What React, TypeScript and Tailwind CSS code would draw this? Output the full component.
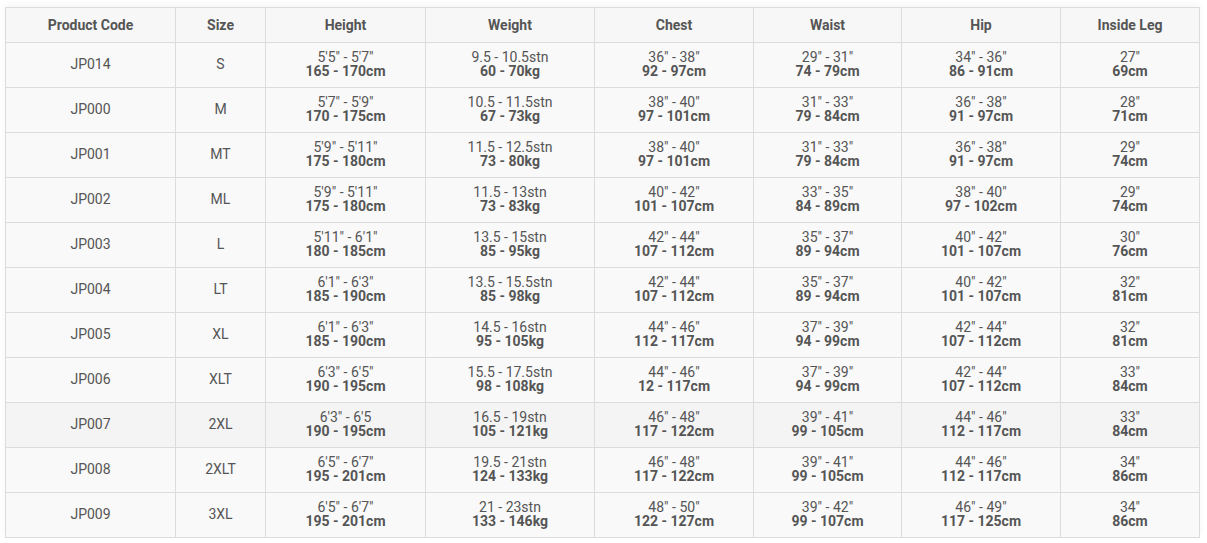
import React from 'react';

interface SizeRow {
  code: string;
  size: string;
  height: [string, string];
  weight: [string, string];
  chest: [string, string];
  waist: [string, string];
  hip: [string, string];
  leg: [string, string];
}

const rows: SizeRow[] = [
  { code: 'JP014', size: 'S', height: ['5′5" - 5′7"', '165 - 170cm'], weight: ['9.5 - 10.5stn', '60 - 70kg'], chest: ['36" - 38"', '92 - 97cm'], waist: ['29" - 31"', '74 - 79cm'], hip: ['34" - 36"', '86 - 91cm'], leg: ['27"', '69cm'] },
  { code: 'JP000', size: 'M', height: ['5′7" - 5′9"', '170 - 175cm'], weight: ['10.5 - 11.5stn', '67 - 73kg'], chest: ['38" - 40"', '97 - 101cm'], waist: ['31" - 33"', '79 - 84cm'], hip: ['36" - 38"', '91 - 97cm'], leg: ['28"', '71cm'] },
  { code: 'JP001', size: 'MT', height: ['5′9" - 5′11"', '175 - 180cm'], weight: ['11.5 - 12.5stn', '73 - 80kg'], chest: ['38" - 40"', '97 - 101cm'], waist: ['31" - 33"', '79 - 84cm'], hip: ['36" - 38"', '91 - 97cm'], leg: ['29"', '74cm'] },
  { code: 'JP002', size: 'ML', height: ['5′9" - 5′11"', '175 - 180cm'], weight: ['11.5 - 13stn', '73 - 83kg'], chest: ['40" - 42"', '101 - 107cm'], waist: ['33" - 35"', '84 - 89cm'], hip: ['38" - 40"', '97 - 102cm'], leg: ['29"', '74cm'] },
  { code: 'JP003', size: 'L', height: ['5′11" - 6′1"', '180 - 185cm'], weight: ['13.5 - 15stn', '85 - 95kg'], chest: ['42" - 44"', '107 - 112cm'], waist: ['35" - 37"', '89 - 94cm'], hip: ['40" - 42"', '101 - 107cm'], leg: ['30"', '76cm'] },
  { code: 'JP004', size: 'LT', height: ['6′1" - 6′3"', '185 - 190cm'], weight: ['13.5 - 15.5stn', '85 - 98kg'], chest: ['42" - 44"', '107 - 112cm'], waist: ['35" - 37"', '89 - 94cm'], hip: ['40" - 42"', '101 - 107cm'], leg: ['32"', '81cm'] },
  { code: 'JP005', size: 'XL', height: ['6′1" - 6′3"', '185 - 190cm'], weight: ['14.5 - 16stn', '95 - 105kg'], chest: ['44" - 46"', '112 - 117cm'], waist: ['37" - 39"', '94 - 99cm'], hip: ['42" - 44"', '107 - 112cm'], leg: ['32"', '81cm'] },
  { code: 'JP006', size: 'XLT', height: ['6′3" - 6′5"', '190 - 195cm'], weight: ['15.5 - 17.5stn', '98 - 108kg'], chest: ['44" - 46"', '12 - 117cm'], waist: ['37" - 39"', '94 - 99cm'], hip: ['42" - 44"', '107 - 112cm'], leg: ['33"', '84cm'] },
  { code: 'JP007', size: '2XL', height: ['6′3" - 6′5', '190 - 195cm'], weight: ['16.5 - 19stn', '105 - 121kg'], chest: ['46" - 48"', '117 - 122cm'], waist: ['39" - 41"', '99 - 105cm'], hip: ['44" - 46"', '112 - 117cm'], leg: ['33"', '84cm'] },
  { code: 'JP008', size: '2XLT', height: ['6′5" - 6′7"', '195 - 201cm'], weight: ['19.5 - 21stn', '124 - 133kg'], chest: ['46" - 48"', '117 - 122cm'], waist: ['39" - 41"', '99 - 105cm'], hip: ['44" - 46"', '112 - 117cm'], leg: ['34"', '86cm'] },
  { code: 'JP009', size: '3XL', height: ['6′5" - 6′7"', '195 - 201cm'], weight: ['21 - 23stn', '133 - 146kg'], chest: ['48" - 50"', '122 - 127cm'], waist: ['39" - 42"', '99 - 107cm'], hip: ['46" - 49"', '117 - 125cm'], leg: ['34"', '86cm'] },
];

const headers = ['Product Code', 'Size', 'Height', 'Weight', 'Chest', 'Waist', 'Hip', 'Inside Leg'];
const widths = ['w-[170px]', 'w-[90px]', 'w-[160px]', 'w-[169px]', 'w-[159px]', 'w-[148px]', 'w-[159px]', 'w-[139px]'];

const Measure: React.FC<{ value: [string, string] }> = ({ value }) => (
  <td className="border border-[#dcdcdc] px-2 pb-[2px] text-center align-middle leading-[14px]">
    <div className="font-normal">{value[0]}</div>
    <div className="font-bold">{value[1]}</div>
  </td>
);

export default function App() {
  return (
    <div className="min-h-[543px] bg-white pl-[5px] pt-[7px] font-['Roboto',sans-serif] text-[14px] text-[#555]">
      <table className="table-fixed border-collapse bg-[#f9f9f9] shadow-[0_-3px_6px_rgba(0,0,0,0.04)]">
        <colgroup>
          {widths.map((w, i) => (
            <col key={i} className={w} />
          ))}
        </colgroup>
        <thead>
          <tr className="h-[35px] bg-[#f7f7f7]">
            {headers.map((h) => (
              <th key={h} className="border border-[#dcdcdc] px-2 text-center font-bold">
                {h}
              </th>
            ))}
          </tr>
        </thead>
        <tbody>
          {rows.map((r) => (
            <tr key={r.code} className={r.code === 'JP007' ? 'h-[45px] bg-[#f4f4f4]' : 'h-[45px]'}>
              <td className="border border-[#dcdcdc] pb-[2px] text-center">{r.code}</td>
              <td className="border border-[#dcdcdc] pb-[2px] text-center">{r.size}</td>
              <Measure value={r.height} />
              <Measure value={r.weight} />
              <Measure value={r.chest} />
              <Measure value={r.waist} />
              <Measure value={r.hip} />
              <Measure value={r.leg} />
            </tr>
          ))}
        </tbody>
      </table>
    </div>
  );
}
